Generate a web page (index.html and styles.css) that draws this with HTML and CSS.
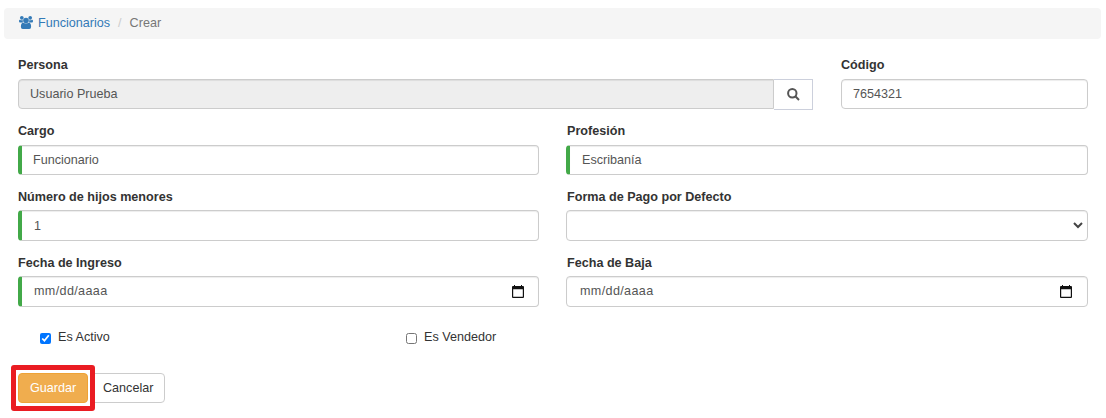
FILE: index.html
```html
<!DOCTYPE html>
<html lang="es">
<head>
<meta charset="utf-8">
<title>Funcionarios</title>
<link rel="stylesheet" href="styles.css">
</head>
<body>
<nav class="breadcrumb">
  <svg class="users" viewBox="0 0 30 28"><circle cx="6" cy="4" r="4"/><circle cx="24" cy="4" r="4"/><path d="M0 12V10Q0 8 2 8Q5 10 8 8.500Q7.500 12 9 14H2Q0 14 0 12ZM30 12V10Q30 8 28 8Q25 10 22 8.500Q22.500 12 21 14H28Q30 14 30 12Z"/><circle cx="15" cy="9.500" r="6"/><path d="M4 23Q4 14.500 9 14.500Q15 18 21 14.500Q26 14.500 26 23Q26 28 22 28H8Q4 28 4 23Z"/></svg>
  <a class="link">Funcionarios</a><span class="slash">/</span><span class="current">Crear</span>
</nav>
<main class="form">
  <div class="row first">
    <div class="field">
      <label class="label">Persona</label>
      <div class="group"><div class="control disabled">Usuario Prueba</div><button class="search"><svg viewBox="0 0 13 13"><circle cx="5.300" cy="5.300" r="4.200"/><path d="M8.300 8.300L12 12"/></svg></button></div>
    </div>
    <div class="field"><label class="label">Código</label><div class="control">7654321</div></div>
  </div>
  <div class="row">
    <div class="field"><label class="label">Cargo</label><div class="control valid">Funcionario</div></div>
    <div class="field shifted"><label class="label">Profesión</label><div class="control valid">Escribanía</div></div>
  </div>
  <div class="row tall">
    <div class="field"><label class="label">Número de hijos menores</label><div class="control valid number">1</div></div>
    <div class="field shifted"><label class="label">Forma de Pago por Defecto</label><div class="control select"><svg class="chevron" viewBox="0 0 10 7"><path d="M1 1L5 5L9 1"/></svg></div></div>
  </div>
  <div class="row tall">
    <div class="field"><label class="label">Fecha de Ingreso</label><div class="control valid date"><span class="mask">mm/dd/aaaa</span><svg class="calendar" viewBox="0 0 12 13"><path d="M0 2Q0 1 1 1H2V0H3V1H9V0H10V1H11Q12 1 12 2V12Q12 13 11 13H1Q0 13 0 12ZM1.200 4.300V11.800H10.800V4.300Z"/></svg></div></div>
    <div class="field shifted"><label class="label">Fecha de Baja</label><div class="control date"><span class="mask">mm/dd/aaaa</span><svg class="calendar" viewBox="0 0 12 13"><path d="M0 2Q0 1 1 1H2V0H3V1H9V0H10V1H11Q12 1 12 2V12Q12 13 11 13H1Q0 13 0 12ZM1.200 4.300V11.800H10.800V4.300Z"/></svg></div></div>
  </div>
  <div class="checks">
    <label class="check"><input class="box" type="checkbox" checked><span>Es Activo</span></label>
    <label class="check"><input class="box" type="checkbox"><span>Es Vendedor</span></label>
  </div>
  <div class="actions">
    <div class="highlighted"><button class="btn primary">Guardar</button></div>
    <button class="btn">Cancelar</button>
  </div>
</main>
</body>
</html>
```
FILE: styles.css
```css
*, *::after { box-sizing: border-box; }
body { margin: 0; min-height: 418px; padding: 8px 5px 0 4px; background: #fff; color: #333; font: 12.6px/18px "Liberation Sans", Arial, sans-serif; }
.breadcrumb { display: flex; align-items: center; height: 31px; padding: 0 15px 2px; background: #f5f5f5; border-radius: 4px; }
.users { width: 14px; height: 13px; margin-right: 5px; fill: #337ab7; }
.link { color: #337ab7; }
.slash { color: #ccc; margin: 0 8px; }
.current { color: #777; }
.form { padding: 16px 13px 0 14px; }
.row { display: grid; grid-template-columns: 521px 522px; column-gap: 27px; height: 66px; }
.first { grid-template-columns: 795px 247px; column-gap: 28px; }
.label { display: block; height: 24px; padding-top: 1px; font-weight: bold; }
.shifted .label { padding-left: 1px; }
.control { height: 30px; padding: 0 11px; border: 1px solid #ccc; border-radius: 4px; box-shadow: inset 0 1px 1px rgba(0,0,0,.075); color: #555; line-height: 28px; }
.shifted .control { padding-left: 12px; }
.tall .label { height: 23px; }
.tall .control { height: 31px; line-height: 30px; }
.valid { border-left: 4px solid #42a948; }
.number { padding-left: 12px; }
.disabled { flex: 1; background: #eee; border-radius: 4px 0 0 4px; }
.group { display: flex; align-items: flex-start; }
.search { width: 39px; height: 31px; margin: 0; padding: 0 0 1px; border: 1px solid #ccd0dc; border-left: 0; background: #fff; display: flex; align-items: center; justify-content: center; }
.search svg { width: 13px; height: 13px; fill: none; stroke: #555; stroke-width: 2; }
.select { display: flex; align-items: center; justify-content: flex-end; padding-right: 4px; }
.chevron { width: 10px; height: 7px; fill: none; stroke: #444; stroke-width: 2; }
.date { display: flex; align-items: center; justify-content: space-between; padding: 0 14px 0 12px; }
.shifted .date { padding-left: 13px; padding-right: 15px; }
.mask { letter-spacing: .35px; line-height: 28px; height: 29px; }
.calendar { width: 12px; height: 13px; fill: #111; fill-rule: evenodd; }
.checks { display: grid; grid-template-columns: 366px 366px; padding-left: 22px; height: 54px; }
.check { display: flex; align-items: flex-start; padding-top: 9px; }
.box { width: 11px; height: 11px; margin: 5px 7px 0 0; }
.actions { display: flex; }
.btn { height: 30px; padding: 0 11px; border: 1px solid #ccc; border-radius: 4px; background: #fff; color: #333; font: inherit; line-height: 28px; }
.primary { width: 70px; padding: 0; background: #f0ad4e; border-color: #eea236; color: #fff; }
.highlighted { position: relative; margin-right: 3px; height: 30px; }
.highlighted::after { content: ""; position: absolute; z-index: 1; left: -7px; top: -8px; width: 84px; height: 46px; border: 5px solid #ea1c22; border-radius: 3px; }
```
